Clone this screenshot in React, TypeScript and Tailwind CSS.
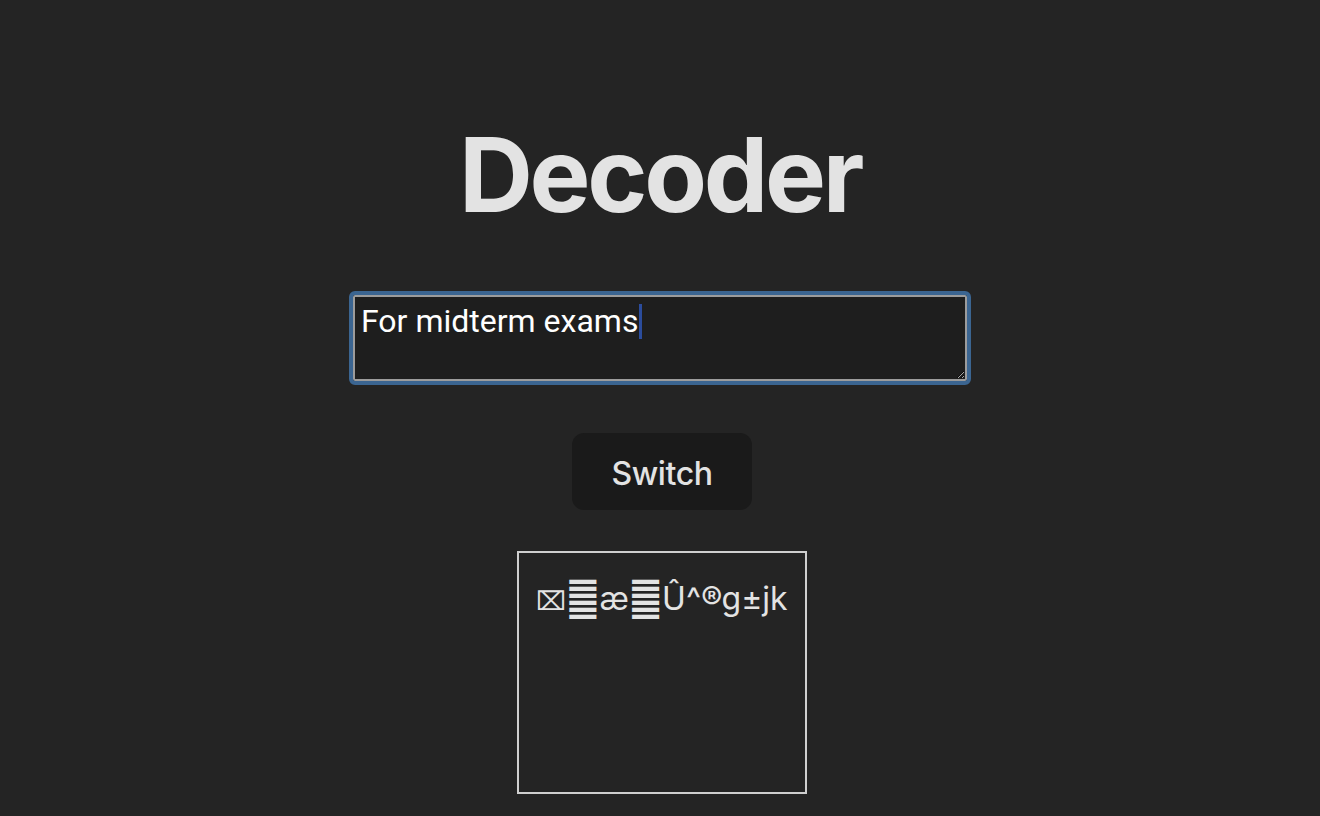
import React from "react";

export default function App() {
  const text = "For midterm exams";
  return (
    <div className="min-h-[816px] w-full bg-[#242424] flex flex-col items-center text-[rgba(255,255,255,0.87)] [font-family:Inter,'DejaVu_Sans',sans-serif]">
      <h1 className="mt-[119px] text-[102.4px] leading-[1.1] font-bold tracking-[-3.3px] text-[#e3e3e3]">Decoder</h1>
      <div className="relative mt-[63px]">
        <textarea
          defaultValue={text}
          className="block w-[614px] h-[86px] bg-[#1e1e1e] border-2 border-[#9c9c9c] rounded-[2px] pl-[6px] pt-[6px] text-[32px] leading-[1.172] text-white [font-family:Roboto,sans-serif] outline-[4px] outline-solid outline-[#3b6591] caret-transparent resize-y"
        />
        <span className="absolute left-[286px] top-[9px] w-[3px] h-[35px] bg-[#2b4c9c]" />
      </div>
      <button className="mt-[52px] ml-[4px] w-[180px] h-[77px] pt-[5px] rounded-[12px] bg-[#1a1a1a] text-[32px] font-medium tracking-[-0.4px] text-[#e3e3e3] [font-family:Inter,sans-serif]">
        Switch
      </button>
      <div className="mt-[41px] ml-[4px] w-[290px] h-[243px] border-2 border-[#cfcfcf] flex justify-center pt-[22px]">
        <span className="text-[32px] leading-[1.5] h-[48px] whitespace-nowrap text-[#e3e3e3] [font-family:Inter,'DejaVu_Sans',sans-serif]">
          <span className="[font-family:'Noto_Sans_CJK_JP',sans-serif] text-[26px] leading-[0]">⌧</span>
          <span className="inline-block scale-y-[1.2] [font-family:'DejaVu_Sans',sans-serif] text-[37px] leading-[0]">䷀</span>
          æ
          <span className="inline-block scale-y-[1.2] [font-family:'DejaVu_Sans',sans-serif] text-[37px] leading-[0]">䷀</span>
          Û^®g±jk
        </span>
      </div>
    </div>
  );
}
